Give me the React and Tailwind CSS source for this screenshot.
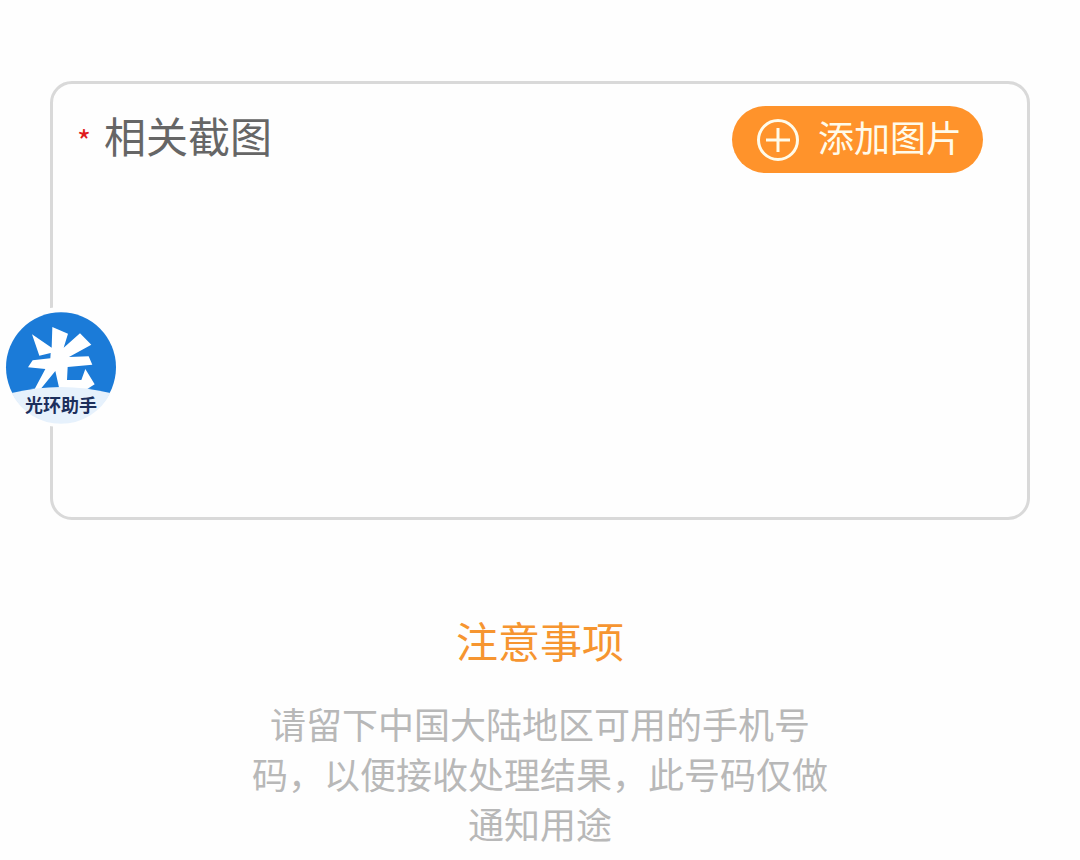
const cjk = "font-['Noto_Sans_CJK_SC',sans-serif]";

const PlusCircle = () => (
  <svg viewBox="0 0 44 44" className="size-11 shrink-0" fill="none" stroke="currentColor" strokeWidth="3" aria-hidden="true">
    <circle cx="22" cy="22" r="19.5" />
    <path d="M22 10v24M10 22h24" />
  </svg>
);

const Emblem = () => (
  <svg viewBox="3 22 360 360" className="size-full" aria-hidden="true">
    <circle cx="183" cy="203" r="165" fill="#1b7bd8" />
    <path
      fill="#fff"
      d="M157 82L204 102L191 144L240 101L274 135L207 172L266 170L277 195L203 202L201 241L244 241L256 208L284 254L262 268H178L166 214L122 268H104L136 208L84 203L98 182L151 176L152 160L118 168L96 104L155 144Z"
    />
    <path d="M35 280Q183 244 331 280A165 165 0 0 1 35 280Z" fill="#e6f1fc" />
  </svg>
);

const AssistantButton = () => (
  <button
    type="button"
    aria-label="光环助手"
    className="absolute left-px top-[307px] size-[120px] rounded-full bg-[#fefefe]"
  >
    <Emblem />
    <span className="absolute inset-x-0 bottom-[13px] text-center text-lg font-bold leading-5 text-[#1c2f5c]">
      光环助手
    </span>
  </button>
);

const App = () => {
  return (
    <div className={`${cjk} relative min-h-screen bg-[#fefefe] pt-[81px]`}>
      <section className="mx-[50px] h-[439px] rounded-[22px] border-3 border-[#d9d9d9] px-6 pt-[22px]">
        <div className="flex items-start justify-between pr-5">
          <h2 className="flex items-center gap-[13px] text-[42px] leading-[58px] text-[#666]">
            <span className="self-end text-3xl leading-12 text-[#e01b1b]">*</span>
            相关截图
          </h2>
          <button
            type="button"
            className="flex h-[67px] items-center gap-[18px] rounded-full bg-[#ff932b] pl-6 pr-[21px] text-4xl text-[#fffbea]"
          >
            <PlusCircle />
            <span className="pb-2">添加图片</span>
          </button>
        </div>
      </section>

      <section className="mt-[90px] text-center">
        <h2 className="text-[42px] leading-[60px] text-[#f69530]">注意事项</h2>
        <p className="mx-auto mt-7 max-w-[576px] text-4xl leading-[50px] text-[#b8b8b8]">
          请留下中国大陆地区可用的手机号码，以便接收处理结果，此号码仅做通知用途
        </p>
      </section>

      <AssistantButton />
    </div>
  );
};

export default App;
